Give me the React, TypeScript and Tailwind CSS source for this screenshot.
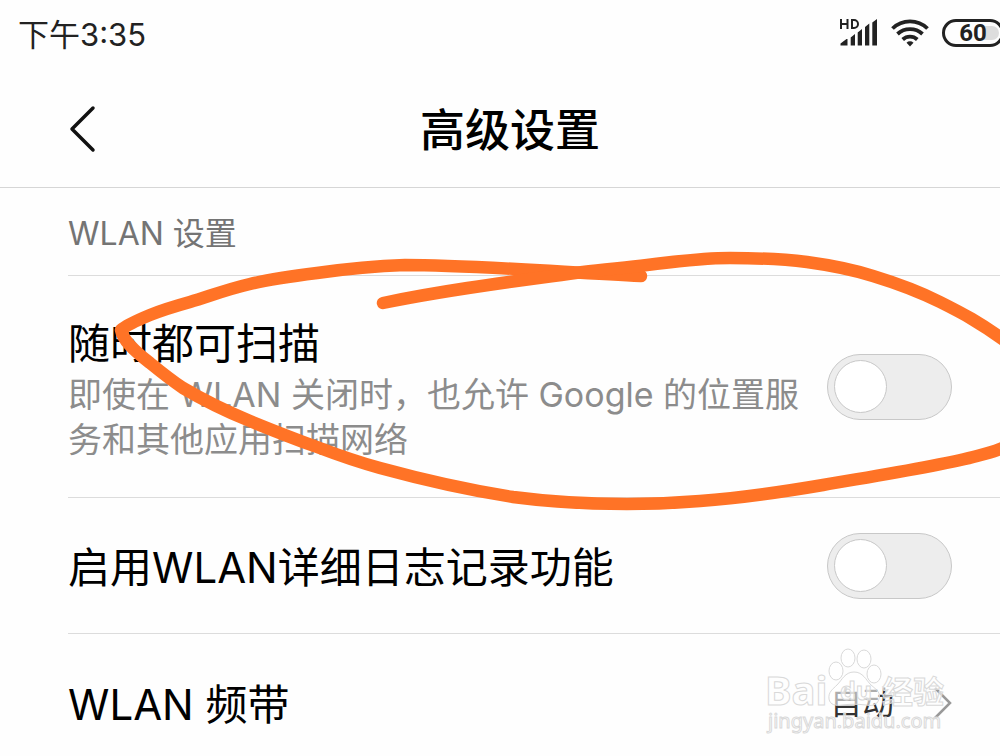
import type { ReactNode } from 'react'

function SignalIcon() {
  return (
    <svg className="w-10 h-8" viewBox="0 0 40 32" fill="#222" aria-hidden="true">
      <path d="M3 2v10M3 7h6.500M9.500 2v10" stroke="#222" strokeWidth="2" fill="none" />
      <path d="M14 3v8h2a4 4 0 0 0 0-8z" stroke="#222" strokeWidth="2" fill="none" />
      <path d="M2.500 28.500v-2L8.500 22h1v6.500zM12.700 20.500l4.300-3.500v11.500h-4.300zM19.700 15.500 24 12v16.500h-4.300zM27 10 31.300 6.500v22H27zM34.300 5.500 39 2v26.500h-4.700z" />
    </svg>
  )
}

function WifiIcon() {
  return (
    <svg className="w-10 h-8" viewBox="0 0 40 32" fill="none" stroke="#222" strokeWidth="3.800" aria-hidden="true">
      <path d="M2.500 11.500a25 25 0 0 1 35 0" />
      <path d="M7.500 17a18.200 18.200 0 0 1 25 0" />
      <path d="M12.700 22.500a10.800 10.800 0 0 1 14.600 0" />
      <path d="M16.500 25.700a5 5 0 0 1 7 0L20 29.500z" fill="#222" stroke="none" />
    </svg>
  )
}

function StatusBar() {
  return (
    <div className="flex items-center justify-between h-[70px] pl-[18px]">
      <span className="text-[31px] leading-10 text-[#222]">下午3:35</span>
      <div className="flex items-center shrink-0 -mr-1 pb-1">
        <SignalIcon />
        <div className="ml-3 mr-3">
          <WifiIcon />
        </div>
        <div className="relative flex items-center justify-center w-[62px] h-7 rounded-full border-3 border-[#222] overflow-hidden">
          <span className="absolute right-0.5 top-1 bottom-1 w-4 rounded-r-full bg-[#ddd]" />
          <span className="relative font-[Roboto] text-2xl font-bold text-[#222]">60</span>
        </div>
      </div>
    </div>
  )
}

function Header() {
  return (
    <header className="relative flex items-center justify-center h-[118px] pl-5 pt-1 border-b border-[#d6d6d6]">
      <button type="button" aria-label="返回" className="absolute left-[68px] top-[35px]">
        <svg className="w-8 h-12" viewBox="0 0 32 48" fill="none" stroke="#111" strokeWidth="3.500" strokeLinecap="round" strokeLinejoin="round">
          <path d="M25 3 4 24l21 21" />
        </svg>
      </button>
      <h1 className="text-[45px] leading-none font-medium text-black">高级设置</h1>
    </header>
  )
}

function Switch({ id }: { id: string }) {
  return (
    <input
      id={id}
      type="checkbox"
      role="switch"
      className="appearance-none shrink-0 flex items-center w-[125px] h-[66px] px-1.5 rounded-full border border-[#c8c8c8] bg-[#ededed] before:block before:size-[53px] before:rounded-full before:border before:border-[#c8c8c8] before:bg-white checked:justify-end checked:bg-blue-500"
    />
  )
}

function Row({ children, className }: { children: ReactNode; className: string }) {
  return <div className={`flex items-center justify-between gap-6 pr-12 ${className}`}>{children}</div>
}

function Watermark() {
  return (
    <svg
      className="absolute left-[760px] top-[640px] w-[200px] h-[100px] pointer-events-none font-['Noto_Sans','Noto_Sans_CJK_SC',sans-serif] font-bold"
      viewBox="0 0 200 100"
      fill="#fff"
      fillOpacity="0.6"
      stroke="#d9d9d9"
    >
      <ellipse cx="76" cy="31" rx="7" ry="9" />
      <ellipse cx="88" cy="18" rx="7" ry="9" />
      <ellipse cx="104" cy="19" rx="7" ry="9" />
      <ellipse cx="114" cy="34" rx="7" ry="9" />
      <path d="M94 32c9 0 12 8 17 13 6 5 10 8 8 14-2 7-8 7-13 6-8-1-16-1-24 0-6 1-12 0-13-6-1-7 4-10 8-14 5-5 8-13 17-13z" />
      <text x="5" y="65" fontSize="40">Bai</text>
      <text x="80" y="60" fontSize="25">du</text>
      <text x="122" y="63" fontSize="31">经验</text>
      <text x="8" y="88" fontSize="20" fontWeight="400">jingyan.baidu.com</text>
    </svg>
  )
}

export default function App() {
  return (
    <main className="relative min-h-screen overflow-hidden bg-[#fefefe] font-['Inter','Noto_Sans_CJK_SC',sans-serif]">
      <StatusBar />
      <Header />

      <section className="pl-[68px]">
        <h2 className="flex items-center h-22 pt-1 border-b border-[#dcdcdc] text-[32px] text-[#747474]">WLAN 设置</h2>

        <Row className="h-[222px] border-b border-[#dcdcdc]">
          <label htmlFor="scan" className="flex-1 pt-1">
            <span className="block text-[42px] leading-14 text-black">随时都可扫描</span>
            <span className="block text-[34px] leading-[45px] text-[#8c8c8c]">
              即使在 WLAN 关闭时，也允许 Google 的位置服务和其他应用扫描网络
            </span>
          </label>
          <Switch id="scan" />
        </Row>

        <Row className="h-[136px] border-b border-[#dcdcdc]">
          <label htmlFor="log" className="pt-1 text-[42px] leading-14 text-black">启用WLAN详细日志记录功能</label>
          <Switch id="log" />
        </Row>

        <Row className="h-[138px]">
          <span className="pt-1 text-[42px] leading-14 text-black">WLAN 频带</span>
          <button type="button" className="flex items-center gap-10 text-[32px] text-[#333]">
            自动
            <svg className="w-[18px] h-8" viewBox="0 0 18 32" fill="none" stroke="#999" strokeWidth="2.500" aria-hidden="true">
              <path d="m1 1 15 15L1 31" />
            </svg>
          </button>
        </Row>
      </section>

      <Watermark />

      {/* hand-drawn circle around the scanning option */}
      <svg
        className="absolute left-0 top-0 w-[1040px] h-[756px] max-w-none pointer-events-none"
        viewBox="0 0 1040 756"
        fill="none"
        stroke="#ff7326"
        strokeWidth="12.500"
        strokeLinecap="round"
        strokeLinejoin="round"
        aria-hidden="true"
      >
        <path d="M641 276C560 272 470 265 405 265C375 266 345 269 317 273C293 276 270 279 250 284C228 289 210 296 190 302C172 307 160 311 150 315C138 320 125 326 121 330C123 340 133 350 150 363C161 372 171 380 183 388C205 401 228 412 250 421C272 430 295 439 317 447C338 455 358 462 380 468C424 480 468 490 513 497C551 502 589 504 627 504C651 504 676 503 700 501C741 498 782 492 823 485C875 476 940 466 977 456C985 454 993 452 1000 449L1012 444" />
        <path d="M1012 346C980 322 960 312 940 302C918 291 896 283 873 276C851 269 829 265 807 262C782 259 756 258 730 258C700 258 672 262 647 265C625 268 604 269 583 272C517 281 450 289 383 303" />
      </svg>
    </main>
  )
}
